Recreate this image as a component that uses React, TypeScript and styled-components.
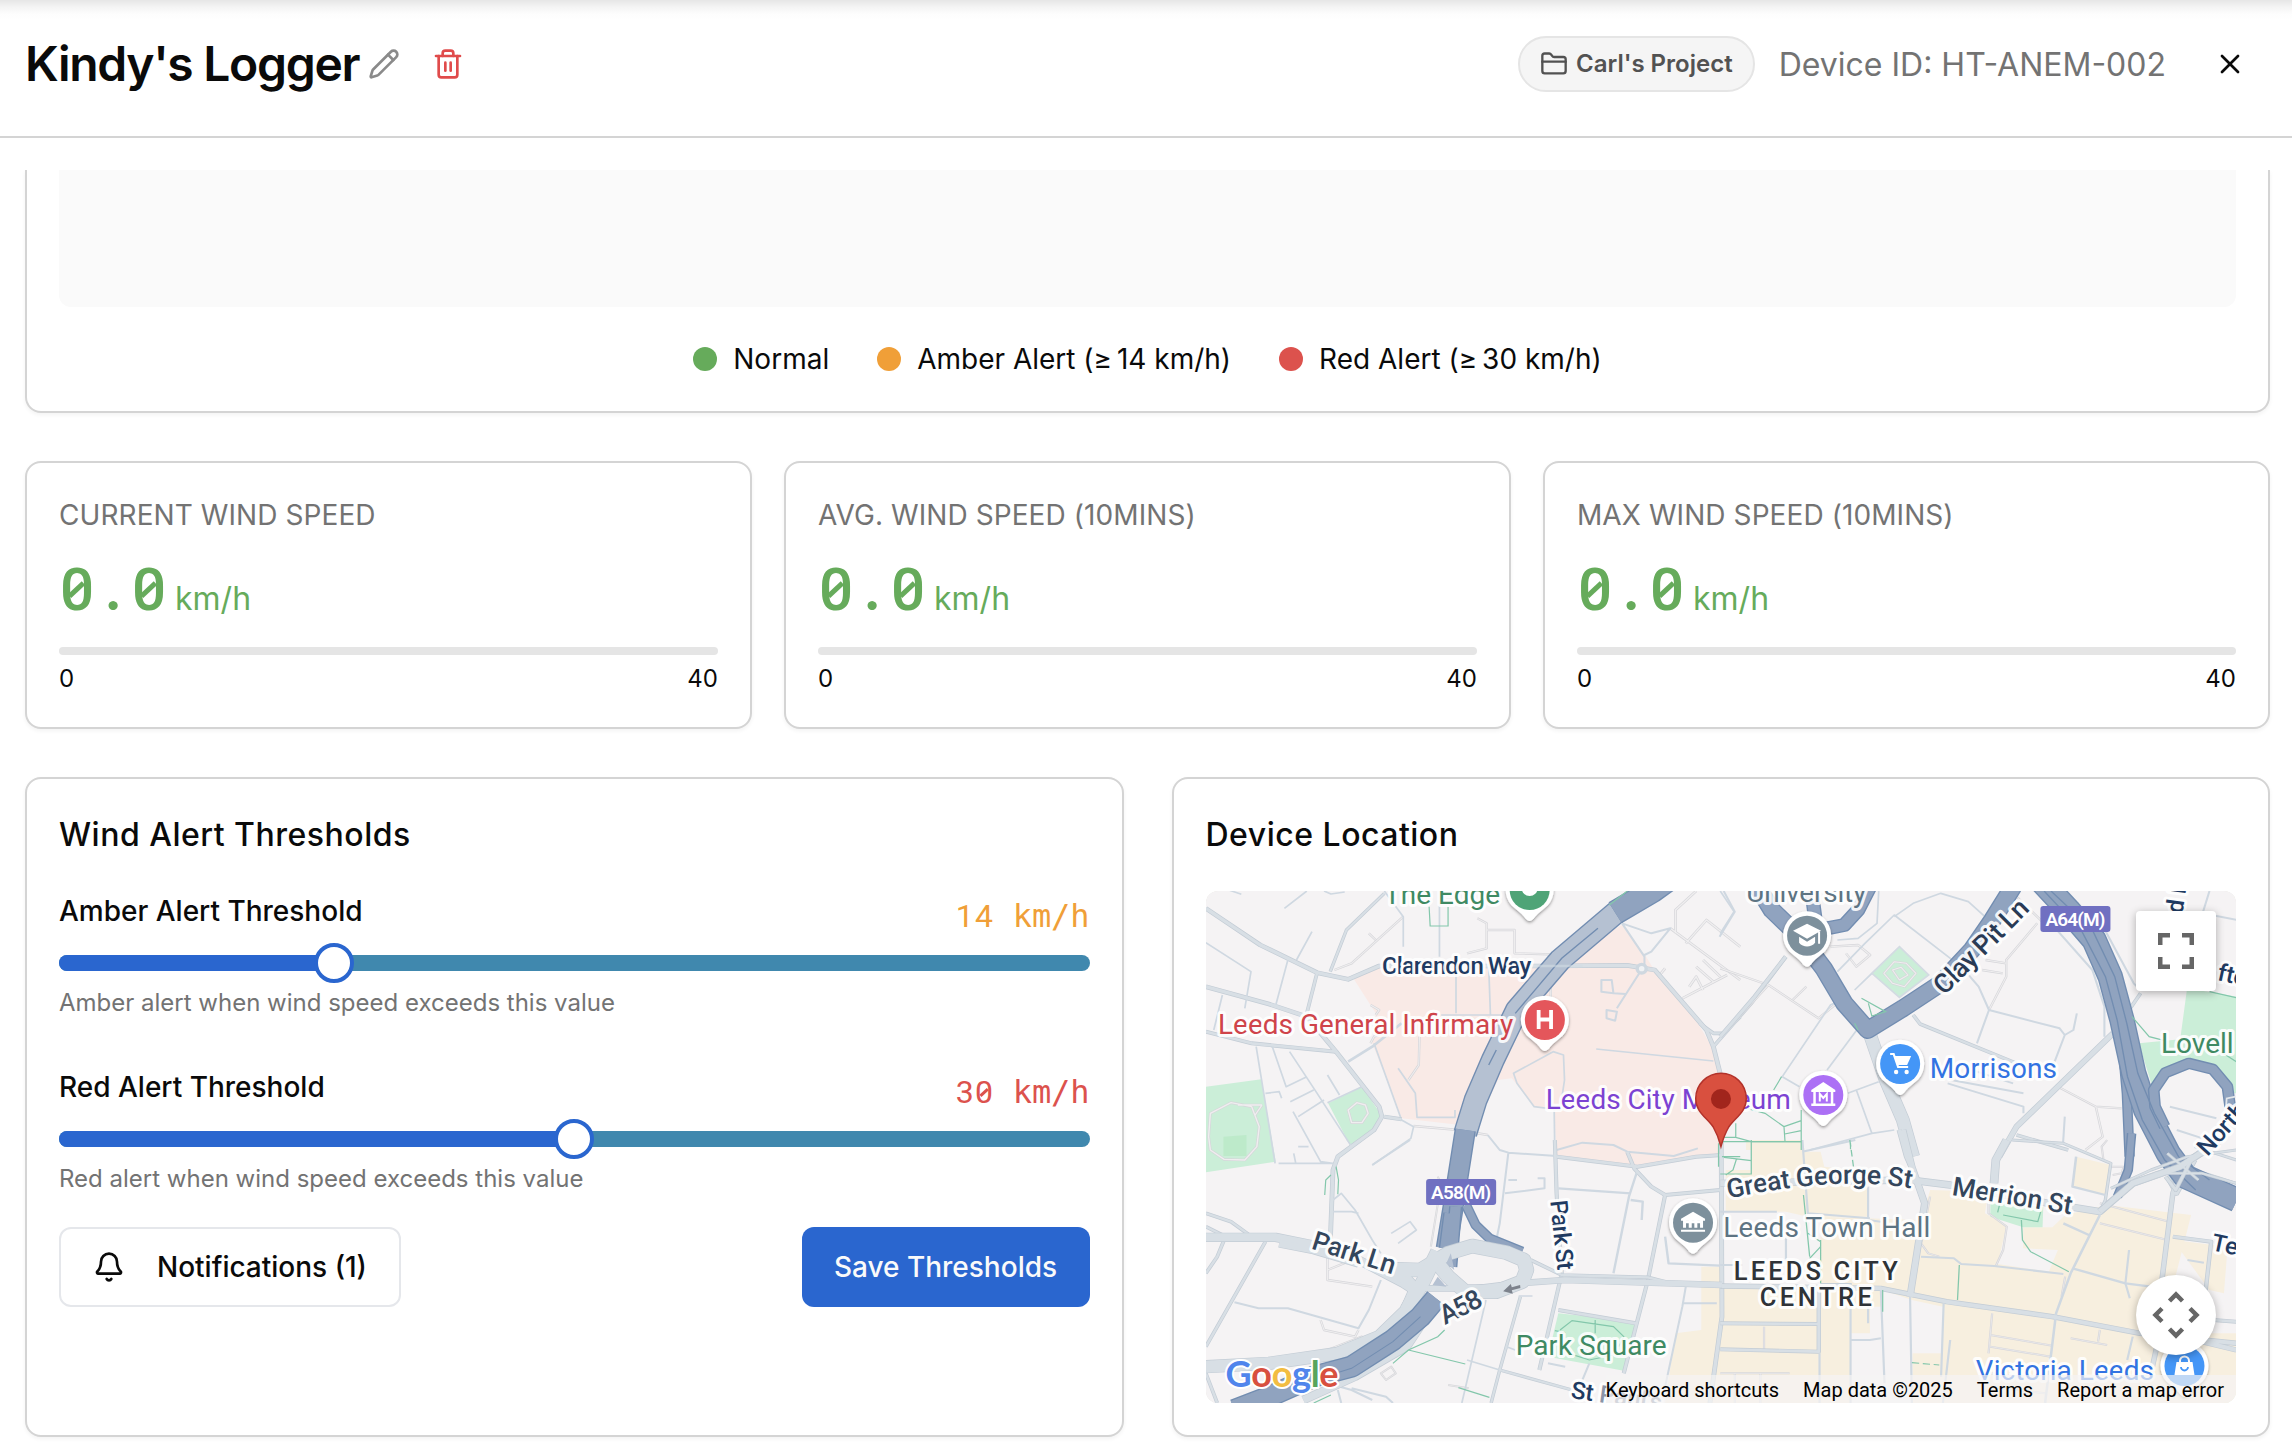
import React from "react";
import styled, { createGlobalStyle, css } from "styled-components";
import { Bell, FolderClosed, Pencil, Trash2, X } from "lucide-react";

const Global = createGlobalStyle`
  *, *::before, *::after { box-sizing: border-box; }
  body { margin: 0; background: #fff; font-family: Inter, "Liberation Sans", sans-serif; color: #0a0a0a; }
  button { font: inherit; color: inherit; border: 0; background: none; padding: 0; }
`;

const Page = styled.div`
  width: 2292px;
  height: 1456px;
  overflow: hidden;
  display: flex;
  flex-direction: column;
  background: linear-gradient(#e6e6e6, #f4f4f4 7px, #fdfdfd 14px, #fff 20px);
`;

const Header = styled.header`
  flex: none;
  height: 138px;
  padding: 0 46px 8px 25px;
  border-bottom: 2px solid #d4d4d4;
  display: flex;
  align-items: center;
  justify-content: space-between;
`;

const HeaderGroup = styled.div<{ $gap: number }>`
  display: flex;
  align-items: center;
  gap: ${(p) => p.$gap}px;
`;

const Title = styled.h1`
  margin: 0 7px 0 0;
  width: 336px;
  font-size: 48px;
  font-weight: 600;
  line-height: 64px;
  letter-spacing: -1.3px;
  white-space: nowrap;
`;

const IconButton = styled.button<{ $color: string }>`
  width: 32px;
  height: 32px;
  display: flex;
  color: ${(p) => p.$color};
`;

const Pill = styled.span`
  height: 56px;
  padding: 0 20px 1px;
  border: 2px solid #e5e5e5;
  border-radius: 28px;
  background: #f5f5f5;
  color: #525252;
  display: flex;
  align-items: center;
  gap: 8px;
  font-size: 24px;
  font-weight: 600;
`;

const DeviceId = styled.span`
  color: #737373;
  font-size: 32px;
  margin-right: 24px;
`;

const Body = styled.main`
  flex: 1;
  min-height: 0;
  margin-top: 32px;
  padding: 0 22px 0 25px;
  overflow: hidden;
  display: flex;
  flex-direction: column;
  gap: 48px;
`;

const Card = styled.section`
  border: 2px solid #d4d4d4;
  border-radius: 16px;
  background: #fff;
  padding: 32px;
  box-shadow: 0 2px 4px rgba(0, 0, 0, 0.05);
`;

const ChartCard = styled(Card)`
  border-top: 0;
  border-radius: 0 0 16px 16px;
  padding-top: 0;
`;

const ChartArea = styled.div`
  height: 137px;
  border-radius: 0 0 12px 12px;
  background: #fafafa;
`;

const Legend = styled.div`
  margin-top: 32px;
  display: flex;
  justify-content: center;
  gap: 48px;
`;

const LegendItem = styled.div`
  display: flex;
  align-items: center;
  gap: 16px;
  font-size: 28px;
  line-height: 40px;
`;

const AtLeast = styled.span`
  letter-spacing: -1.5px;
`;

const Dot = styled.i<{ $color: string }>`
  width: 24px;
  height: 24px;
  border-radius: 50%;
  background: ${(p) => p.$color};
`;

const Stats = styled.div`
  display: grid;
  grid-template-columns: repeat(3, 1fr);
  gap: 32px;
`;

const StatTitle = styled.div`
  font-size: 28px;
  line-height: 40px;
  letter-spacing: 0.08px;
  color: #737373;
`;

const StatValue = styled.div`
  margin-top: 16px;
  height: 72px;
  line-height: 72px;
  display: flex;
  align-items: baseline;
  gap: 8px;
  color: #66ab5b;
`;

const StatNumber = styled.span`
  font-family: "DejaVu Sans Mono", monospace;
  font-size: 60px;
  font-weight: 500;
`;

const StatUnit = styled.span`
  font-size: 32px;
`;

/* One fixed-pitch figure; a zero is crossed by a short diagonal stroke. */
const Cell = styled.span<{ $zero: boolean; $dot: boolean }>`
  position: relative;
  display: inline-block;
  width: 0.6em;
  text-align: center;
  font-family: Roboto, sans-serif;
  ${(p) => p.$dot && css`
    font-family: Lato, sans-serif;
    font-weight: 700;
  `}
  ${(p) => p.$zero && css`
    &::after {
      content: "";
      position: absolute;
      left: 50%;
      bottom: 0;
      top: 0;
      margin: auto 0 auto -0.16em;
      width: 0.32em;
      height: 0.085em;
      background: currentColor;
      transform: rotate(-43deg);
    }
  `}
`;

const Meter = styled.div`
  margin-top: 24px;
  height: 8px;
  border-radius: 4px;
  background: #e5e5e5;
`;

const Scale = styled.div`
  margin-top: 8px;
  display: flex;
  justify-content: space-between;
  font-size: 24px;
  line-height: 32px;
`;

const Bottom = styled.div`
  display: grid;
  grid-template-columns: repeat(2, minmax(0, 1fr));
  gap: 48px;
`;

const CardTitle = styled.h2`
  margin: 0 0 32px;
  font-size: 32px;
  font-weight: 500;
  line-height: 48px;
  letter-spacing: 0.5px;
`;

const Threshold = styled.div`
  margin-bottom: 48px;
  &:nth-of-type(2) { margin-bottom: 32px; }
`;

const ThresholdHead = styled.div`
  display: flex;
  justify-content: space-between;
  align-items: flex-start;
  height: 48px;
  font-size: 28px;
  font-weight: 500;
  line-height: 40px;
`;

const ThresholdValue = styled.span<{ $color: string }>`
  font: 400 32px/50px "DejaVu Sans Mono", monospace;
  letter-spacing: -0.06px;
  color: ${(p) => p.$color};
`;

const Slider = styled.div`
  position: relative;
  margin-top: 4px;
  height: 40px;
  display: flex;
  align-items: center;
`;

const Track = styled.div`
  width: 100%;
  height: 16px;
  border-radius: 8px;
  background: #4088ae;
  overflow: hidden;
`;

const Fill = styled.div`
  height: 100%;
  background: #2a66cf;
`;

const Thumb = styled.div`
  position: absolute;
  top: 0;
  width: 40px;
  height: 40px;
  margin-left: -20px;
  border: 4px solid #2a66cf;
  border-radius: 50%;
  background: #fff;
`;

const Help = styled.p`
  margin: 4px 0 0;
  font-size: 24px;
  line-height: 32px;
  color: #737373;
`;

const Actions = styled.div`
  display: flex;
  justify-content: space-between;
`;

const Button = styled.button<{ $primary?: boolean }>`
  height: 80px;
  width: ${(p) => (p.$primary ? 288 : 342)}px;
  padding-left: ${(p) => (p.$primary ? 0 : 32)}px;
  border: ${(p) => (p.$primary ? "0" : "2px solid #e5e7eb")};
  border-radius: 12px;
  background: ${(p) => (p.$primary ? "#2a66cf" : "#fff")};
  color: ${(p) => (p.$primary ? "#fafafa" : "#0a0a0a")};
  display: flex;
  align-items: center;
  justify-content: ${(p) => (p.$primary ? "center" : "flex-start")};
  gap: 32px;
  font-size: 28px;
  font-weight: 500;
`;

const MapBox = styled.div`
  position: relative;
  height: 512px;
  border-radius: 12px;
  overflow: hidden;
  background: #e5e3df;
  font-family: Roboto, "Liberation Sans", sans-serif;
  & > svg { display: block; width: 100%; height: 100%; }
`;

const FullscreenButton = styled.button`
  position: absolute;
  top: 20px;
  right: 20px;
  width: 80px;
  height: 80px;
  border-radius: 4px;
  background: #fff;
  box-shadow: 0 2px 8px rgba(0, 0, 0, 0.3);
  display: flex;
  align-items: center;
  justify-content: center;
`;

const PanButton = styled(FullscreenButton)`
  top: 384px;
  border-radius: 50%;
`;

const Attribution = styled.div`
  position: absolute;
  right: 0;
  bottom: 0;
  height: 28px;
  padding: 1px 12px 0 0;
  display: flex;
  align-items: center;
  gap: 24px;
  font-size: 20px;
  color: #000;
  white-space: nowrap;
  background: rgba(245, 243, 244, 0.7);
`;

type Line = [d: string, w: number];

/* Street geometry. Each list has its own local grid, placed by the group transforms below. */
const NW_STREETS: Line[] = [
  ["M17 320L200 372L310 410L395 515L520 680L528 710L505 750L400 830L386 870L378 1090", 14],
  ["M17 455L150 490L395 515", 12],
  ["M535 40L425 150L378 275", 10],
  ["M17 85L175 195L340 278L430 298L520 258H980L1240 256L1320 270L1470 450L1490 500L1512 590L1515 1310L1480 1569", 14],
  ["M340 278L310 400", 11],
  ["M17 188L148 275L130 385M255 240L220 375M70 25L120 43M325 155L280 240M535 33L590 110V200M310 33L245 85M65 345L40 450M360 33L380 42L420 36", 5],
  ["M430 545L500 500L585 430", 8],
  ["M505 490L585 720L620 740L612 775L500 855M575 565L625 640L630 712H740V690", 5],
  ["M163 500L218 850M210 500L250 620L310 590M260 515L340 640L440 800M262 665L330 630M285 710L360 660M190 640L230 635L237 655M270 695L350 845L385 850L228 850M370 585L405 645M370 668L470 620M285 800H315M272 820L278 850", 5],
  ["M743 260V400M838 260L843 405M700 405H955M695 33V230", 5],
  ["M1165 300H1195L1200 340L1165 335ZM1200 340L1235 342M1275 280L1210 385M1180 390L1210 395L1205 422L1180 415Z", 6],
  ["M1150 507L1490 543M910 580L1025 515L1055 525L1058 600L1045 690L970 680L920 610ZM1028 690L1030 830", 5],
  ["M1225 130L1290 230V256M1225 130L1310 160L1365 145L1310 215L1290 225M1520 33L1552 95L1508 170", 6],
  ["M1450 430L1490 460L1520 460L1568 410M1490 500L1600 370L1700 230", 11],
  ["M1035 830L1270 860L1440 830L1515 825M1240 815L1260 865L1310 920L1350 945L1510 930", 12],
  ["M1035 810L1110 788L1200 795L1240 815L1375 828L1445 805", 6],
  ["M535 710L585 718M1030 780L1035 940L1050 1180L985 1470", 12],
  ["M835 765L870 810L895 818L1035 828M895 818L870 1030L860 1080M895 900H920M885 940L1000 925V895H980", 6],
  ["M1270 870L1245 950L1200 1180M1040 925L1250 940M1250 960L1285 965L1282 1020M1350 1070L1360 1150L1510 1157", 7],
  ["M1350 945L1300 1200L1230 1480M1040 1290L1265 1330", 12],
  ["M1410 1220L1400 1280L1350 1520M1400 1270H1500M1010 1450L1060 1460M1130 1450L1110 1500", 6],
  ["M930 1250L870 1470L845 1569M870 1470L1080 1530", 10],
  ["M830 1260L760 1569M775 1440L870 1470M925 1248H965M890 1400L915 1410", 5],
  ["M100 1267L170 1285H255L460 1345L490 1290L525 1200M500 1560L440 1530L370 1510M400 1530L410 1569M560 1569L540 1550L440 1525", 6],
  ["M386 960L410 940L450 990L500 1080L525 1120M386 995H440L460 1000M500 855L610 780M555 1060L610 1025L628 1050L575 1090", 5],
  ["M17 1000L90 1025L150 1070M17 1040L75 1070M70 1080L50 1130L17 1180M190 1085L17 1400M17 1480L50 1569", 11],
];

const NW_PATHS: Line[] = [
  ["M590 110L440 250L390 270M490 160L510 180M805 115L832 130V205L775 220M832 150H913V220L1080 225V210M1018 230V360", 5],
  ["M1365 145L1568 300M1380 160L1380 90L1440 33M1410 190L1470 120L1568 200M1400 355L1530 285M1460 240L1510 290M1440 260L1490 305M1420 320L1440 290L1460 330M1350 265L1330 290", 6],
  ["M495 375L520 390L510 405M495 490L505 470L560 450M637 470L635 555L605 600M620 738L750 750L835 765M370 1090V1200L500 1220M370 1170L430 1145M350 1320L360 1350L450 1370L460 1350M370 1410L470 1370L500 1420", 5],
  ["M720 1515L780 1525M525 1480L555 1460L568 1480L540 1500ZM690 890L700 910L670 1100", 4],
  ["M25 770L30 700L90 668L150 680L172 740L165 800L130 840L70 838L30 810ZM430 690L455 668L480 675L488 700L470 728L440 728ZM180 675H110M180 675L160 705", 6],
];

const NE_STREETS: Line[] = [
  ["M0 470L100 350L190 230", 13],
  ["M430 450L480 600L530 720L560 830", 40],
  ["M560 405L580 432L860 550M1220 340L1140 460M860 765L1010 810", 11],
  ["M1140 460L980 620L860 740L810 830", 18],
  ["M340 275L420 190L505 105L680 245M505 110L560 70L640 40L720 65L790 130M390 330L440 280M460 33L455 130L400 175L340 180M0 160L40 95L0 33", 5],
  ["M350 360L320 375L180 590L230 620M310 570L400 445M370 640L460 605M395 630L440 760L505 750M440 760L260 810", 5],
  ["M700 260L750 320L780 390L985 445L1000 465L965 560M1000 465L1025 450L1035 400M780 390L745 490", 6],
  ["M1000 710L995 790M670 600L880 640M660 610L880 680V700M960 130L1080 270L1115 380V470M1080 80L1200 310L1220 330M1420 33L1400 100M1400 100L1500 120", 6],
  ["M1305 680L1440 715M1325 750L1400 775M700 560L850 610", 6],
];

const NE_PATHS: Line[] = [
  ["M0 265L140 315L285 415L350 360M140 315L20 450M210 360L250 320M320 200L400 195L435 225L395 260L365 220M920 130L830 240V290L780 390M770 240L830 250M760 270L820 280M980 620L1090 680L1165 685M1090 680L1110 770L1060 810M860 50L940 130", 5],
  ["M475 280L505 245L540 250L568 280L535 320L500 310ZM500 270L525 262L545 285L520 300Z", 5],
];

const SE_STREETS: Line[] = [
  ["M500 -30L525 80L560 190L520 470", 20],
  ["M490 -30L510 50L550 150", 14],
  ["M0 130L520 120L630 135L900 190L1040 215L1130 130L1260 80L1370 0", 22],
  ["M0 438L440 445L620 485L910 530L1150 580L1414 610M1300 600L1414 630", 16],
  ["M785 0L755 60L750 130", 24],
  ["M1260 90L1240 160L1210 420M1200 600L1180 700M1250 50L1230 120L1250 160L1300 60", 15],
  ["M800 0L940 10L1070 70L1055 180L1040 215M1270 80L1414 130M1300 20L1414 60", 9],
  ["M1040 225L960 400L920 520L890 789M965 385L1110 430L1180 440M940 250L1010 285M975 50L965 140L1055 165", 7],
  ["M1240 290L1345 305L1330 450M0 550L270 552V635L0 628M270 440V560M1350 540L1414 545M360 435H275", 12],
  ["M550 350L640 355L660 372L750 378L940 402M357 500V789M357 600H410L440 595M440 450L450 730M520 470L525 789M612 490L605 710M405 500V550M630 600L610 789M272 640V789", 6],
  ["M1120 330L1110 430L1122 475M1130 590L1115 660M1280 360L1325 368M0 215H155M180 290V370M405 140V240L440 245M0 375H60M225 35L370 0M225 0L240 220L410 235", 6],
];

const SE_PATHS: Line[] = [
  ["M575 170L550 310L570 340L600 350M735 140V220L785 260L775 330L755 378M745 520L735 640M740 585L910 617M740 620L905 650M960 595L1060 615M1040 570L1035 605M1040 250L1225 300M1040 190L1230 245M740 700L900 720M740 740L890 760M120 560V630M0 700H190M40 700V789M110 700V789", 4],
  ["M1070 80H1105L1100 100L1075 105M1060 0L1045 20L1050 60M945 410L935 470", 4],
];

interface StreetsProps {
  lines: Line[];
  fill?: string;
  edge?: string;
}

const Streets = ({ lines, fill = "#d8dfe5", edge = "#c3ccd5" }: StreetsProps) => (
  <g fill="none" strokeLinejoin="round">
    {lines.map(([d, w], i) => (
      <path key={i} d={d} stroke={w > 8 ? edge : "#cfd8e1"} strokeWidth={w} />
    ))}
    {lines.map(([d, w], i) => (w > 8 ? <path key={i} d={d} stroke={fill} strokeWidth={w - 4} /> : null))}
  </g>
);

const Footways = ({ lines }: { lines: Line[] }) => (
  <g fill="none" strokeLinejoin="round">
    {lines.map(([d, w], i) => (
      <React.Fragment key={i}>
        <path d={d} stroke="#d6d6da" strokeWidth={w + 2} />
        <path d={d} stroke="#efeeef" strokeWidth={w - 2} />
      </React.Fragment>
    ))}
  </g>
);

interface MotorwayProps {
  d: string;
  w: number;
  fill?: string;
}

const Motorway = ({ d, w, fill = "#90a3bf" }: MotorwayProps) => (
  <g fill="none" strokeLinejoin="round">
    <path d={d} stroke="#728db1" strokeWidth={w} />
    <path d={d} stroke={fill} strokeWidth={w - 8} />
  </g>
);

interface LabelProps {
  x: number;
  y: number;
  children: React.ReactNode;
  color: string;
  size?: number;
  weight?: number;
  rotate?: number;
  length?: number;
}

const Label = ({ x, y, children, color, size = 28, weight = 400, rotate = 0, length }: LabelProps) => (
  <text
    transform={`translate(${x} ${y}) rotate(${rotate})`}
    fontSize={size}
    fontWeight={weight}
    fill={color}
    stroke="#fff"
    strokeWidth={6}
    strokeOpacity={0.9}
    strokeLinejoin="round"
    paintOrder="stroke"
    textLength={length}
  >
    {children}
  </text>
);

interface PinProps {
  x: number;
  y: number;
  color: string;
  children?: React.ReactNode;
}

const Pin = ({ x, y, color, children }: PinProps) => (
  <g transform={`translate(${x} ${y})`}>
    <path
      d="M0 31C-3 31 -5 27 -8 24L-18 15.500A24 24 0 1 1 18 15.500L8 24C5 27 3 31 0 31Z"
      fill="#fff"
      filter="url(#pinShadow)"
    />
    <circle r={20} fill={color} />
    {children}
  </g>
);

const Shield = ({ x, y, children }: { x: number; y: number; children: string }) => (
  <g>
    <rect x={x} y={y} width={70} height={26} rx={3} fill="#7070c1" />
    <text x={x + 35} y={y + 20} fontSize={19} fontWeight={600} fill="#fff" textAnchor="middle" textLength={60}>
      {children}
    </text>
  </g>
);

const NAVY = "#1f3a61";
const SLATE = "#34465c";
const PARK = "#cbeed8";
const CREAM = "#f7efdf";

const LeedsMap = () => (
  <svg viewBox="1206 891 1030 512" preserveAspectRatio="none">
    <defs>
      <filter id="pinShadow" x="-30%" y="-30%" width="160%" height="160%">
        <feDropShadow dx="0" dy="1.500" stdDeviation="1.500" floodColor="#000" floodOpacity="0.4" />
      </filter>
      <path id="greatGeorge" d="M1728 1198.500Q1843 1174 1918 1190" />
    </defs>
    <rect x="1206" y="891" width="1030" height="512" fill="#f5f3f4" />

    <g transform="translate(1200 880) scale(.34437 .33333)">
      <path d="M445 295L520 258L980 262L1225 135L1295 230L1330 290L1440 420L1485 500L1515 600V820L1270 855L1035 830L1028 690L970 680L905 595L865 600L800 740L585 715L500 490L510 400Z" fill="#f9eae6" />
      <path d="M17 620L178 598L220 845L17 877Z" fill={PARK} />
      <path d="M68 770L135 765V828H68Z" fill="#bdeaca" />
      <path d="M372 670L470 620L530 710L508 750L435 795Z" fill={PARK} />
      <path d="M425 780H475L435 792Z" fill={PARK} />
      <path d="M1040 1300L1270 1325L1230 1472L1010 1430Z" fill={PARK} />
      <path d="M1455 1160H1515V1569H1350L1380 1360L1455 1350Z" fill={CREAM} />
    </g>
    <g transform="translate(1720 880) scale(.34437 .33333)">
      <path d="M520 200L605 285L520 352L440 280Z" fill={PARK} stroke="#d3dbe2" strokeWidth="5" />
      <path d="M1355 325L1498 350V640H1260L1215 490L1335 478Z" fill={PARK} />
      <path d="M1270 700L1262 620L1300 580L1360 560L1430 575L1470 620L1475 700L1380 800Z" fill="#f5f3f4" />
      <path d="M75 785H240V810H75Z" fill={CREAM} />
    </g>
    <g transform="translate(1720 1140) scale(.36483 .33333)">
      <path d="M85 0H225L232 35L275 35L285 80L370 90L405 130V230H240L180 215H15V90H85Z" fill={CREAM} />
      <path d="M275 230L550 240L575 150L735 155L725 220L785 255L760 372L900 395L925 330L830 325V262H910L945 225L1060 195L1290 225L1240 440L1145 580L1414 580V789H527V640H610V500L525 480L445 450L440 500H410V580H357V789H0V440H275Z" fill={CREAM} />
      <path d="M975 50L1070 75L1055 165L965 140ZM1240 300L1390 320L1380 460L1340 450Z" fill={CREAM} />
      <path d="M740 190L885 200L883 262H830L740 230Z" fill={PARK} />
    </g>

    <g transform="translate(1200 880) scale(.34437 .33333)">
      <Footways lines={NW_PATHS} />
      <Streets lines={NW_STREETS} />
    </g>
    <g transform="translate(1720 880) scale(.34437 .33333)">
      <Footways lines={NE_PATHS} />
      <Streets lines={NE_STREETS} />
    </g>
    <g transform="translate(1720 1140) scale(.36483 .33333)">
      <Footways lines={SE_PATHS} />
      <Streets lines={SE_STREETS} />
    </g>

    <g transform="translate(1200 880) scale(.34437 .33333)">
      <Motorway d="M1210 95L1045 240L920 390L850 540L800 660L770 760" w={70} fill="#b5c1d2" />
      <path d="M1155 145L1050 235L915 400M860 510L838 555" fill="none" stroke="#728db1" strokeWidth="4" />
      <path d="M980 258H1110M955 405H1018" stroke="#d3dce3" strokeWidth="8" opacity=".6" />
      <circle cx="1282" cy="266" r="13" fill="#f0f2f4" stroke="#cfd8e0" strokeWidth="10" />
      <Motorway d="M1370 -10L1312 33L1205 98" w={74} />
      <Motorway d="M770 750L735 980L715 1105" w={62} />
      <Motorway d="M725 1000L712 1105M742 980L728 1160" w={38} />
      <Motorway d="M772 975L800 1035L840 1075L935 1115" w={30} />
      <Streets
        lines={[
          ["M17 1072H220L330 1095L460 1140L590 1210L620 1230", 28],
          ["M230 1090L330 1110L460 1150", 26],
          ["M17 1460L200 1450L400 1420L520 1370L600 1290L625 1230L580 1180L560 1160", 40],
          ["M690 1260L600 1400L450 1490L300 1560", 26],
          ["M570 1168L640 1170L720 1120L790 1098L890 1118L940 1140L948 1170L935 1205L860 1235L770 1235L720 1190L690 1150", 44],
          ["M600 1290L650 1200L690 1115", 44],
          ["M640 1225H800L920 1210L1060 1200L1515 1215", 20],
          ["M960 1140L1050 1185L1300 1192L1350 1205", 11],
        ]}
      />
      <path d="M715 1150L738 1170L728 1120ZM675 1215L690 1190L715 1220Z" fill="#b5c1d2" />
      <Motorway d="M685 1255L640 1310L560 1380L440 1460L330 1490L200 1550L100 1590" w={66} />
      <path d="M640 1310L560 1385L440 1465L300 1510" stroke="#728db1" strokeWidth="3" fill="none" />
      <path d="M929 1215L905 1222L902 1212L880 1234L908 1241L905 1231L930 1224Z" fill="#7d828c" />
    </g>
    <g transform="translate(1720 880) scale(.34437 .33333)">
      <Motorway d="M440 10L400 90L360 135L310 145M265 33L275 110L250 150" w={42} />
      <Motorway d="M90 -10L150 90L230 170L300 265L360 370L428 450L530 385L640 310L730 210L790 120L850 20" w={54} />
      <Motorway d="M1155 440L1168 500L1180 640L1188 830" w={30} />
      <Motorway d="M920 -10L1010 90L1085 180L1132 290L1166 420L1200 580L1235 690L1300 820L1350 890L1500 960" w={74} />
      <Motorway d="M1290 740L1262 680L1258 630L1292 578L1360 550L1430 568L1472 620L1480 680" w={34} />
      <path d="M940 33L1050 155L1118 290L1152 420L1182 590L1225 720L1290 840L1380 930M960 33L1080 150L1145 290L1180 430L1212 580L1260 700L1330 830L1420 900" fill="none" stroke="#728db1" strokeWidth="4" />
      <path d="M1495 650L1470 655L1465 720" stroke="#e2e6ea" strokeWidth="5" fill="none" />
    </g>
    <g transform="translate(1720 1140) scale(.36483 .33333)">
      <Motorway d="M1127 -20L1118 90L1088 170" w={26} />
      <Streets
        lines={[
          ["M1040 215L1130 130L1260 80L1370 0", 20],
          ["M1070 145L1180 90L1280 50L1414 30M1190 100L1320 100L1414 130M1225 40L1310 120", 9],
          ["M1220 110L1248 150L1290 60", 12],
        ]}
      />
    </g>

    <g fill="none" stroke="#83c7ab">
      <g transform="translate(1200 880) scale(.34437 .33333)" strokeWidth="3.500">
        <path d="M665 80L668 138H720V80M1188 75L1240 33M605 1410L770 1452M750 1523L840 1552M560 1450L605 1410L690 1370L710 1350M330 1569L380 1545M380 885L365 900L362 945M395 860L402 900L400 943" />
        <path d="M1045 1350L1080 1322L1200 1340L1230 1370L1215 1400M1147 1320V1360M1030 1352L1060 1358M1070 1420L1130 1440L1200 1425" />
        <path d="M1515 830H1568M1505 790V860" />
      </g>
      <g transform="translate(1720 880) scale(.34437 .33333)" strokeWidth="3.500">
        <path d="M410 355L480 395L440 408L430 370M1195 410L1245 470L1290 482M1420 335L1498 353M60 680L130 700L185 740L188 785M185 740L235 722M187 762L235 752M235 690V810M155 630L178 590M390 430L400 450M0 772H45L90 785H235M45 730V772M378 788V808M1430 500L1498 545" />
      </g>
      <g transform="translate(1720 1140) scale(.36483 .33333)" strokeWidth="3.500">
        <path d="M0 5H222M85 0V102H0M10 52L85 62M45 55L35 90L15 105M228 165L245 350M245 355L275 320M275 300V430M655 375L650 480M445 450V515M825 240L828 300L850 335L955 395M765 195L760 217M775 225L870 245L878 215M240 280L275 305" />
        <path d="M355 0L370 120M525 668L600 675" strokeDasharray="20 10" />
      </g>
    </g>

    <Label x={1384} y={904} color="#3f8a63" length={116}>The Edge</Label>
    <Label x={1746} y={902} color="#5d7483" length={120}>University</Label>
    <Label x={1382} y={973.7} color={NAVY} size={24} weight={500} length={149}>Clarendon Way</Label>
    <Label x={1218} y={1033.5} color="#cf444a" length={295}>Leeds General Infirmary</Label>
    <Label x={1545.5} y={1108.6} color="#7c42d2" length={245}>Leeds City Museum</Label>
    <Label x={1929.5} y={1077.7} color="#3273e2" length={127}>Morrisons</Label>
    <Label x={2160.5} y={1052.7} color="#3f8a63">Lovell Park</Label>
    <Label x={1944} y={996} color="#2a3b55" size={27} weight={500} rotate={-45} length={122}>Clay Pit Ln</Label>
    <Label x={2182} y={914} color={NAVY} size={24} weight={500} rotate={-82}>d Pl</Label>
    <Label x={2216} y={980} color={NAVY} size={24} weight={500} rotate={12}>fton</Label>
    <Label x={2207} y={1157} color={NAVY} size={24} weight={500} rotate={-48}>North St</Label>
    <Label x={1951} y={1195} color={SLATE} size={26.500} weight={500} rotate={9.2} length={121}>Merrion St</Label>
    <Label x={0} y={0} color={SLATE} size={26.500} weight={500}>
      <textPath href="#greatGeorge" textLength={184}>Great George St</textPath>
    </Label>
    <Label x={1723} y={1236.7} color="#5d7483" length={207}>Leeds Town Hall</Label>
    <Label x={1733.500} y={1280} color="#2f3338" size={25.500} weight={500} length={164}>LEEDS CITY</Label>
    <Label x={1759.500} y={1306} color="#2f3338" size={25.500} weight={500} length={112}>CENTRE</Label>
    <Label x={2210} y={1250} color={NAVY} size={24} weight={500} rotate={12}>Templar</Label>
    <Label x={1310.500} y={1248.500} color={SLATE} size={26.500} weight={500} rotate={17.500} length={86}>Park Ln</Label>
    <Label x={1550} y={1201} color={NAVY} size={24} weight={500} rotate={84} length={70}>Park St</Label>
    <Label x={1445} y={1325} color={SLATE} size={27} weight={500} rotate={-27} length={44}>A58</Label>
    <Label x={1515.500} y={1354.500} color="#3f8a63" length={151}>Park Square</Label>
    <Label x={1570} y={1398} color={NAVY} size={24} weight={500} rotate={8}>St <tspan fill="#8a94a8">Paul's</tspan></Label>
    <Label x={1975.500} y={1379.6} color="#3273e2" length={178}>Victoria Leeds</Label>

    <Shield x={2040} y={906}>A64(M)</Shield>
    <Shield x={1426} y={1179}>A58(M)</Shield>

    <Pin x={1529.500} y={890} color="#4fa477">
      <path d="M-8 -2A8 8 0 0 0 8 -2Z" fill="#fff" />
    </Pin>
    <Pin x={1544.700} y={1020} color="#e4565b">
      <path d="M-6.200 -10V9M6.200 -10V9M-6.200 -0.500H6.200" stroke="#fff" strokeWidth="3.800" fill="none" />
    </Pin>
    <Pin x={1806.800} y={935.700} color="#7d909c">
      <path d="M0 -12L14 -5L0 3L-14 -5Z" fill="#fff" />
      <path d="M-8 1V7C-4 12 4 12 8 7V1L0 6Z" fill="#fff" />
      <path d="M12 -4V8" stroke="#fff" strokeWidth="2" />
    </Pin>
    <Pin x={1823} y={1095} color="#ac70f5">
      <path d="M-12 -5L0 -13L12 -5V-3H-12ZM-12 8.500H12V11H-12ZM-10 -3H-7.500V9H-10ZM7.500 -3H10V9H7.500Z" fill="#fff" />
      <path d="M-3.500 6.500V-1L0 3L3.500 -1V6.500" stroke="#fff" strokeWidth="2" fill="none" />
    </Pin>
    <Pin x={1899.800} y={1064} color="#4496f7">
      <path d="M-10 -10H-6.500L-2 3H8" stroke="#fff" strokeWidth="2.200" fill="none" />
      <path d="M-6 -8H11L7 1H-3Z" fill="#fff" />
      <circle cx="-4" cy="8" r="2.200" fill="#fff" />
      <circle cx="6.500" cy="8" r="2.200" fill="#fff" />
    </Pin>
    <Pin x={1692.800} y={1222.700} color="#7d909c">
      <path d="M-12 -4L0 -11L12 -4V-2H-12ZM-12 7H12V9H-12Z" fill="#fff" />
      <path d="M-8.500 -3V5M-2.800 -3V5M2.800 -3V5M8.500 -3V5M-8.500 -1H8.500" stroke="#fff" strokeWidth="3" />
    </Pin>
    <Pin x={2184} y={1366} color="#4496f7">
      <path d="M-8 -4H8L10 9H-10Z" fill="#fff" />
      <path d="M-4.500 -3V-5A4.500 4.500 0 0 1 4.500 -5V-3" stroke="#fff" strokeWidth="2" fill="none" />
      <path d="M-3.500 1A3.500 3.500 0 0 0 3.500 1" stroke="#4496f7" strokeWidth="1.800" fill="none" />
    </Pin>

    <path
      d="M1720.700 1146.500C1719 1140 1717 1134 1713 1127C1706 1117 1695.500 1112 1695.500 1098.500A25.200 25.200 0 0 1 1746 1098.500C1746 1112 1735.500 1117 1728.500 1127C1724.500 1134 1722.500 1140 1720.700 1146.500Z"
      fill="#d9503f"
      stroke="#b3322a"
      strokeWidth="1.500"
    />
    <circle cx="1720.700" cy="1099" r="10" fill="#a1251c" />

    <text
      x="1225.500"
      y="1387"
      fontFamily="Lato"
      fontSize="36"
      fontWeight="700"
      textLength="113"
      stroke="#fff"
      strokeWidth="4"
      strokeLinejoin="round"
      paintOrder="stroke"
    >
      <tspan fill="#5085ec">G</tspan>
      <tspan fill="#d8503f">o</tspan>
      <tspan fill="#f2bd42">o</tspan>
      <tspan fill="#5085ec">g</tspan>
      <tspan fill="#58a55c">l</tspan>
      <tspan fill="#d8503f">e</tspan>
    </text>
  </svg>
);

const Figures = ({ children }: { children: string }) => (
  <>
    {children.split("").map((c, i) => (
      <Cell key={i} $zero={c === "0"} $dot={c === "."}>{c}</Cell>
    ))}
  </>
);

interface ThresholdRowProps {
  label: string;
  value: string;
  help: string;
  color: string;
  position: number;
}

const ThresholdRow = ({ label, value, help, color, position }: ThresholdRowProps) => (
  <Threshold>
    <ThresholdHead>
      <span>{label}</span>
      <ThresholdValue $color={color}><Figures>{value}</Figures> km/h</ThresholdValue>
    </ThresholdHead>
    <Slider>
      <Track>
        <Fill style={{ width: `${position}%` }} />
      </Track>
      <Thumb style={{ left: `${position}%` }} />
    </Slider>
    <Help>{help}</Help>
  </Threshold>
);

const LEGEND = [
  { label: "Normal", color: "#66ab5b" },
  { label: "Amber Alert", limit: 14, color: "#f09f38" },
  { label: "Red Alert", limit: 30, color: "#dc524d" },
];

const STATS = ["CURRENT WIND SPEED", "AVG. WIND SPEED (10MINS)", "MAX WIND SPEED (10MINS)"];

export default function App() {
  return (
    <>
      <Global />
      <Page>
        <Header>
          <HeaderGroup $gap={0}>
            <Title>Kindy's Logger</Title>
            <HeaderGroup $gap={32}>
              <IconButton $color="#8a8a8a"><Pencil size={32} /></IconButton>
              <IconButton $color="#e04b4b"><Trash2 size={32} /></IconButton>
            </HeaderGroup>
          </HeaderGroup>
          <HeaderGroup $gap={24}>
            <Pill><FolderClosed size={28} />Carl's Project</Pill>
            <DeviceId>Device ID: HT-ANEM-002</DeviceId>
            <IconButton $color="#0a0a0a"><X size={32} /></IconButton>
          </HeaderGroup>
        </Header>
        <Body>
          <ChartCard>
            <ChartArea />
            <Legend>
              {LEGEND.map((l) => (
                <LegendItem key={l.label}>
                  <Dot $color={l.color} />
                  <span>
                    {l.label}
                    {l.limit && <> (<AtLeast>≥ </AtLeast>{l.limit} km/h)</>}
                  </span>
                </LegendItem>
              ))}
            </Legend>
          </ChartCard>
          <Stats>
            {STATS.map((s) => (
              <Card key={s}>
                <StatTitle>{s}</StatTitle>
                <StatValue>
                  <StatNumber><Figures>0.0</Figures></StatNumber>
                  <StatUnit>km/h</StatUnit>
                </StatValue>
                <Meter />
                <Scale><span>0</span><span>40</span></Scale>
              </Card>
            ))}
          </Stats>
          <Bottom>
            <Card>
              <CardTitle>Wind Alert Thresholds</CardTitle>
              <ThresholdRow
                label="Amber Alert Threshold"
                value="14"
                help="Amber alert when wind speed exceeds this value"
                color="#f09f38"
                position={26.67}
              />
              <ThresholdRow
                label="Red Alert Threshold"
                value="30"
                help="Red alert when wind speed exceeds this value"
                color="#dc524d"
                position={50}
              />
              <Actions>
                <Button><Bell size={32} />Notifications (1)</Button>
                <Button $primary>Save Thresholds</Button>
              </Actions>
            </Card>
            <Card>
              <CardTitle>Device Location</CardTitle>
              <MapBox>
                <LeedsMap />
                <FullscreenButton aria-label="Toggle fullscreen view">
                  <svg width="36" height="36" fill="none" stroke="#666" strokeWidth="4.500">
                    <path d="M2.250 12V2.250H12M24 2.250H33.750V12M33.750 24V33.750H24M12 33.750H2.250V24" />
                  </svg>
                </FullscreenButton>
                <PanButton aria-label="Map camera controls">
                  <svg width="48" height="48" fill="none" stroke="#666" strokeWidth="4.500">
                    <path d="M17.500 10L24 3.500L30.500 10M17.500 38L24 44.500L30.500 38M10 17.500L3.500 24L10 30.500M38 17.500L44.500 24L38 30.500" />
                  </svg>
                </PanButton>
                <Attribution>
                  <span>Keyboard shortcuts</span>
                  <span>Map data ©2025</span>
                  <span>Terms</span>
                  <span>Report a map error</span>
                </Attribution>
              </MapBox>
            </Card>
          </Bottom>
        </Body>
      </Page>
    </>
  );
}
